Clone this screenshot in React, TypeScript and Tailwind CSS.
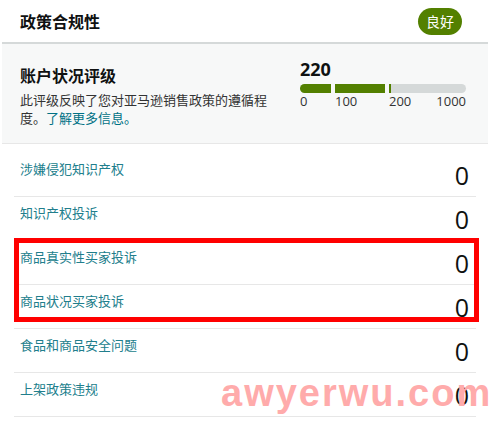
const CJK = "font-['Microsoft_YaHei','Noto_Sans_CJK_SC',sans-serif]";

const rows = [
  '涉嫌侵犯知识产权',
  '知识产权投诉',
  '商品真实性买家投诉',
  '商品状况买家投诉',
  '食品和商品安全问题',
  '上架政策违规',
];

function Header() {
  return (
    <div className="flex h-[42px] items-center justify-between pl-[18px] pr-[26px]">
      <h2 className={`${CJK} text-[16px] font-bold leading-[20px] text-[#0f1111]`}>政策合规性</h2>
      <span className={`${CJK} flex h-[27px] w-[44px] items-center justify-center rounded-full bg-[#538000] text-[14px] leading-none text-white`}>
        良好
      </span>
    </div>
  );
}

function HealthBar() {
  return (
    <div className="w-[166px] pt-[6px]">
      <div className="font-['Open_Sans',sans-serif] text-[18px] font-bold leading-[22px] text-[#0f1111]">220</div>
      <div className="mt-[4px] flex h-[9px] gap-[4px]">
        <div className="w-[31px] rounded-l-full bg-[#538000]" />
        <div className="w-[50px] bg-[#538000]" />
        <div className="flex flex-1 overflow-hidden rounded-r-full bg-[#d5d9d9]">
          <div className="w-[2px] bg-[#538000]" />
        </div>
      </div>
      <div className="flex font-['Open_Sans',sans-serif] text-[13px] leading-[16px] text-[#333]">
        <span className="w-[35px]">0</span>
        <span className="w-[54px]">100</span>
        <span className="flex-1">200</span>
        <span>1000</span>
      </div>
    </div>
  );
}

function AccountHealth() {
  return (
    <div className="flex h-[102px] justify-between border-t-2 border-b border-[#d5d9d9] border-b-[#e7e7e7] bg-[#f7f8f8] pl-[18px] pr-[22px]">
      <div className="w-[249px] pt-[20px]">
        <h3 className={`${CJK} text-[16px] font-bold leading-[22px] text-[#0f1111]`}>账户状况评级</h3>
        <p className={`${CJK} mt-[5px] text-[13px] leading-[18px] text-[#333]`}>
          此评级反映了您对亚马逊销售政策的遵循程度。<span className="text-[#007185]">了解更多信息。</span>
        </p>
      </div>
      <div className="pt-[8px]">
        <HealthBar />
      </div>
    </div>
  );
}

export default function App() {
  return (
    <div className="h-[422px] w-[498px] overflow-hidden bg-white">
      <div className="ml-[2px] w-[486px]">
        <Header />
        <AccountHealth />
      </div>
      <div className="relative mt-[9px]">
        <div className="ml-[14px] w-[462px]">
          {rows.map((label) => (
            <div key={label} className="flex h-[44px] items-start justify-between border-b border-[#e7e7e7] pl-[6px] pr-[7px]">
              <span className={`${CJK} pt-[6px] text-[13px] leading-[20px] text-[#217e8c]`}>{label}</span>
              <span className="pt-[8px] font-['Open_Sans',sans-serif] text-[25px] leading-[28px] text-[#0f1111]">0</span>
            </div>
          ))}
        </div>
        {/* annotation box */}
        <div className="pointer-events-none absolute left-[14px] top-[85px] h-[84px] w-[465px] border-[5px] border-[#ff0000]" />
        <div className="pointer-events-none absolute left-[221px] top-[218px] font-['Liberation_Sans',sans-serif] text-[38px] font-bold leading-[44px] tracking-[2px] text-[#ffabab]">
          awyerwu.com
        </div>
      </div>
    </div>
  );
}
